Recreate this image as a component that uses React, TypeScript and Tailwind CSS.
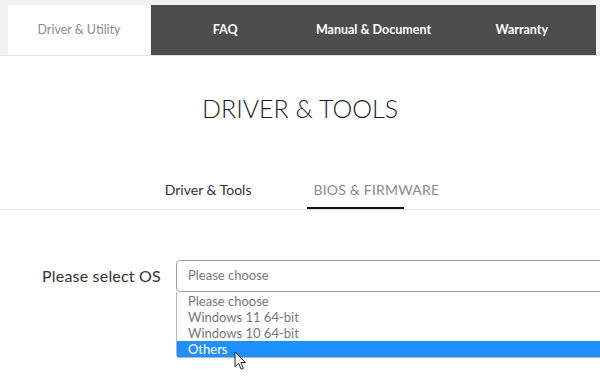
import { useState } from "react";

const TOP_TABS = ["FAQ", "Manual & Document", "Warranty"];
const OS_OPTIONS = ["Please choose", "Windows 11 64-bit", "Windows 10 64-bit", "Others"];

function Cursor() {
  return (
    <svg width="13" height="20" viewBox="0 0 13 20" className="absolute left-[234px] top-[351px]">
      <path
        d="M1 1 L1 15.5 L4.6 12.3 L7.2 18.3 L9.4 17.3 L6.9 11.5 L11.6 11.5 Z"
        fill="#fff"
        stroke="#222"
        strokeWidth="1"
        strokeLinejoin="round"
      />
    </svg>
  );
}

export default function App() {
  const [selected] = useState("Others");

  return (
    <div className="relative h-[382px] w-[600px] overflow-hidden bg-white font-['Lato','Noto_Sans',sans-serif]">
      {/* top tabs */}
      <div className="flex h-[56px] border-b border-[#e4e4e4] bg-[#f1f1f1] pl-[8px] pr-[4px] pt-[5px]">
        <div className="flex h-[50px] w-[142px] items-center justify-center bg-white text-[12.5px] text-[#8c8c8c]">
          Driver &amp; Utility
        </div>
        <div className="ml-px grid h-[50px] flex-1 grid-cols-3 bg-[#4d4d4d]">
          {TOP_TABS.map((tab) => (
            <div key={tab} className="flex items-center justify-center text-[12.5px] font-bold text-white">
              {tab}
            </div>
          ))}
        </div>
      </div>

      <h1 className="mt-[36px] text-center text-[25px] font-light leading-[32px] text-[#1e1e1e]">
        DRIVER &amp; TOOLS
      </h1>

      {/* sub tabs */}
      <div className="mt-[56px] flex justify-center gap-[62px] border-b border-[#e2e2e2] pl-[4px]">
        <div className="flex flex-col">
          <span className="h-[20px] text-[14px] leading-[20px] text-[#333]">Driver &amp; Tools</span>
          <div className="mt-[7px] h-[2px]" />
        </div>
        <div className="flex flex-col">
          <span className="h-[20px] text-[14px] leading-[20px] tracking-[0.2px] text-[#8a8a8a]">BIOS &amp; FIRMWARE</span>
          <div className="-ml-[6px] mt-[7px] h-[2px] w-[97px] bg-[#111]" />
        </div>
      </div>

      {/* os select */}
      <div className="mt-[50px] flex items-start gap-[15px] pl-[42px]">
        <label className="mt-[6px] text-[16px] leading-[20px] tracking-[0.2px] text-[#333]">Please select OS</label>
        <div className="-mr-[10px] flex flex-1 flex-col">
          <div className="flex h-[32px] items-center rounded-[4px] border border-[#a0a0a0] pl-[11px] text-[13px] text-[#7a7a7a]">
            Please choose
          </div>
          <ul className="rounded-bl-[4px] border-b border-l border-[#b5b5b5] pt-px">
            {OS_OPTIONS.map((option) => (
              <li
                key={option}
                className={
                  option === selected
                    ? "h-[16px] bg-[#1e90ff] pl-[11px] text-[13px] leading-[16px] text-white"
                    : "h-[16px] pl-[11px] text-[13px] leading-[16px] text-[#777]"
                }
              >
                {option}
              </li>
            ))}
          </ul>
        </div>
      </div>

      <Cursor />
    </div>
  );
}
